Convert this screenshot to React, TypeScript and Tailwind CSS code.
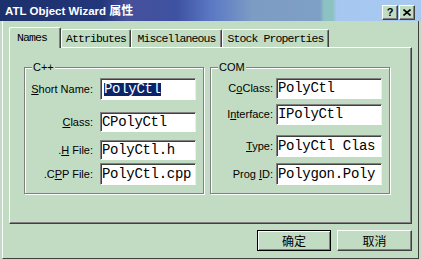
import type { ReactNode } from "react";

const mono = "font-['Liberation_Mono',monospace]";

interface FieldProps {
  label: ReactNode;
  value: string;
  h: string;
  mt?: string;
  selected?: boolean;
  gap: string;
  boxW: string;
}

function Field({ label, value, h, mt = "", selected, gap, boxW }: FieldProps) {
  return (
    <div className={`flex items-center justify-end ${gap} ${mt}`}>
      <span className="text-[11px] leading-none whitespace-nowrap">{label}</span>
      <div
        className={`${boxW} ${h} bg-white border-t border-l border-[#808080] border-b border-r border-b-white border-r-[#e8f2e8] shadow-[inset_1px_1px_0_#404040] flex items-center overflow-hidden whitespace-nowrap ${selected ? "pl-[3px]" : "pl-[1px]"}`}
      >
        <span
          className={`${mono} text-[14px] tracking-[-0.3px] leading-[13px] ${selected ? "bg-[#0a246a] text-white" : "text-black"}`}
        >
          {value}
        </span>
      </div>
    </div>
  );
}

function Group({ title, children }: { title: string; children: ReactNode }) {
  return (
    <div className="relative w-[180px] h-[127px] border border-[#808080] shadow-[1px_1px_0_#fff,inset_1px_1px_0_#fff]">
      <span className="absolute left-[7px] -top-[7px] px-[1px] bg-[#c2dcc3] text-[11px] leading-[13px]">
        {title}
      </span>
      {children}
    </div>
  );
}

function Tab({ label, w, active }: { label: string; w: string; active?: boolean }) {
  return (
    <div
      className={`${w} flex items-center bg-[#c2dcc3] border-t border-l border-white border-r border-r-[#404040] rounded-t-[2px] shadow-[inset_-1px_0_0_#808080] ${mono} text-[11.5px] tracking-[-0.9px] leading-none ${
        active ? "h-[21px] -mb-px relative z-10 pl-[7px] pb-[1px]" : "h-[18px] justify-center"
      }`}
    >
      {label}
    </div>
  );
}

export default function App() {
  return (
    <div className="w-[421px] h-[260px] bg-[#c2dcc3] flex flex-col overflow-hidden font-['Liberation_Sans',sans-serif] text-black">
      {/* title bar */}
      <div className="h-[21px] shrink-0 flex items-center pl-[5px] pr-[6px] bg-[linear-gradient(to_right,#1c306c_0%,#22367a_24%,#46509a_30%,#3e52a2_42%,#5a78c4_50%,#7c9cc4_60%,#7e9fc6_76%,#8cc2c2_77%,#8cc2c2_79%,#a6c8f0_80%,#a8caf0_100%)]">
        <span className="text-white font-bold text-[11.5px] leading-none whitespace-nowrap">
          ATL Object Wizard{" "}
          <span className="font-['Noto_Sans_CJK_SC',sans-serif] text-[12px]">属性</span>
        </span>
        <div className="ml-auto self-start pt-[5px] flex gap-[1px]">
          <div className="w-[16px] h-[15px] bg-[#c2dcc3] border-t border-l border-white border-b border-r border-b-[#404040] border-r-[#404040] shadow-[inset_-1px_-1px_0_#808080] flex items-center justify-center text-[11px] font-bold leading-none">
            ?
          </div>
          <div className="w-[16px] h-[15px] bg-[#c2dcc3] border-t border-l border-white border-b border-r border-b-[#404040] border-r-[#404040] shadow-[inset_-1px_-1px_0_#808080] flex items-center justify-center">
            <svg width="8" height="7" viewBox="0 0 8 7">
              <path d="M0.5 0.5 L7.5 6.5 M7.5 0.5 L0.5 6.5" stroke="#000" strokeWidth="1.6" />
            </svg>
          </div>
        </div>
      </div>

      {/* dialog body */}
      <div className="flex-1 px-[2px] pb-[1px]">
        <div className="h-full border-l border-white border-r border-b border-r-[#404040] border-b-[#404040] px-[6px] pt-[6px] flex flex-col">
          {/* tabs */}
          <div className="h-[20px] flex items-end">
            <Tab label="Names" w="w-[52px]" active />
            <Tab label="Attributes" w="w-[70px]" />
            <Tab label="Miscellaneous" w="w-[91px]" />
            <Tab label="Stock Properties" w="w-[107px]" />
          </div>

          {/* tab panel */}
          <div className="h-[177px] border-t border-l border-white border-r border-b border-r-[#404040] border-b-[#404040] shadow-[inset_-1px_-1px_0_#808080] flex gap-[6px] pl-[14px] pt-[19px]">
            <Group title="C++">
              <div className="flex flex-col pt-[10px] pr-[7px]">
                <Field
                  label={<><span className="underline">S</span>hort Name:</>}
                  value="PolyCtl"
                  h="h-[22px]"
                  selected
                  gap="gap-[7px]"
                  boxW="w-[96px]"
                />
                <Field
                  label={<><span className="underline">C</span>lass:</>}
                  value="CPolyCtl"
                  h="h-[20px]"
                  mt="mt-[12px]"
                  gap="gap-[7px]"
                  boxW="w-[96px]"
                />
                <Field
                  label={<>.<span className="underline">H</span> File:</>}
                  value="PolyCtl.h"
                  h="h-[20px]"
                  mt="mt-[8px]"
                  gap="gap-[7px]"
                  boxW="w-[96px]"
                />
                <Field
                  label={<>.C<span className="underline">P</span>P File:</>}
                  value="PolyCtl.cpp"
                  h="h-[22px]"
                  mt="mt-[3px]"
                  gap="gap-[7px]"
                  boxW="w-[96px]"
                />
              </div>
            </Group>
            <Group title="COM">
              <div className="flex flex-col pt-[10px] pr-[7px]">
                <Field
                  label={<>C<span className="underline">o</span>Class:</>}
                  value="PolyCtl"
                  h="h-[21px]"
                  gap="gap-[3px]"
                  boxW="w-[106px]"
                />
                <Field
                  label={<>I<span className="underline">n</span>terface:</>}
                  value="IPolyCtl"
                  h="h-[21px]"
                  mt="mt-[5px]"
                  gap="gap-[3px]"
                  boxW="w-[106px]"
                />
                <Field
                  label={<><span className="underline">T</span>ype:</>}
                  value="PolyCtl Clas"
                  h="h-[22px]"
                  mt="mt-[10px]"
                  gap="gap-[3px]"
                  boxW="w-[106px]"
                />
                <Field
                  label={<>Prog <span className="underline">I</span>D:</>}
                  value="Polygon.Poly"
                  h="h-[22px]"
                  mt="mt-[6px]"
                  gap="gap-[3px]"
                  boxW="w-[106px]"
                />
              </div>
            </Group>
          </div>

          {/* buttons */}
          <div className="mt-[6px] flex justify-end gap-[6px]">
            <button className="w-[74px] h-[21px] bg-[#c2dcc3] border border-black shadow-[inset_1px_1px_0_#fff,inset_-1px_-1px_0_#808080] font-['Noto_Sans_CJK_SC',sans-serif] text-[12px] leading-none">
              确定
            </button>
            <button className="w-[75px] h-[21px] bg-[#c2dcc3] border-t border-l border-white border-b border-r border-b-[#404040] border-r-[#404040] shadow-[inset_-1px_-1px_0_#808080] font-['Noto_Sans_CJK_SC',sans-serif] text-[12px] leading-none">
              取消
            </button>
          </div>
        </div>
      </div>
    </div>
  );
}
